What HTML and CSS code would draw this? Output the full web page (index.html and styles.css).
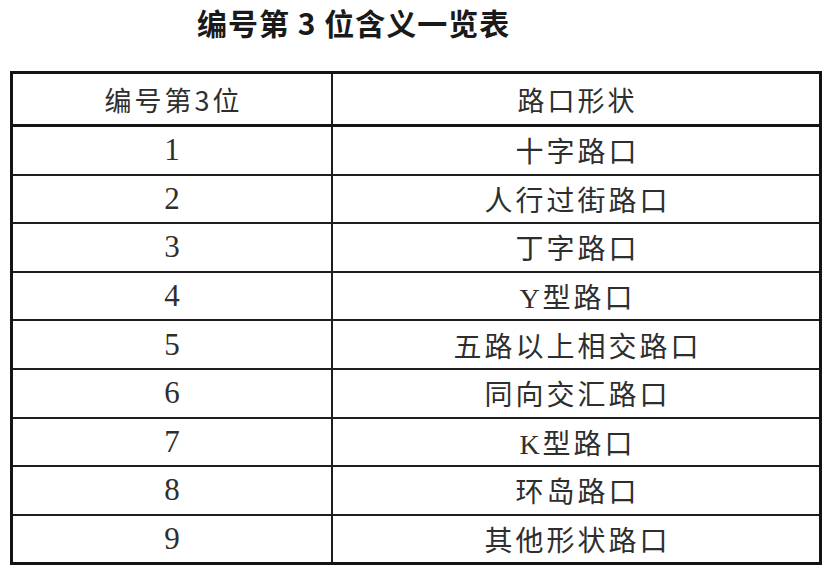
FILE: index.html
```html
<!DOCTYPE html>
<html lang="zh-CN">
<head>
<meta charset="utf-8">
<title>编号第 3 位含义一览表</title>
<link rel="stylesheet" href="styles.css">
</head>
<body>
<h1 class="title">编号第 3 位含义一览表</h1>
<table class="code-table">
  <thead>
    <tr><th class="c1">编号第3位</th><th class="c2">路口形状</th></tr>
  </thead>
  <tbody>
    <tr><td class="c1">1</td><td class="c2">十字路口</td></tr>
    <tr><td class="c1">2</td><td class="c2">人行过街路口</td></tr>
    <tr><td class="c1">3</td><td class="c2">丁字路口</td></tr>
    <tr><td class="c1">4</td><td class="c2">Y型路口</td></tr>
    <tr><td class="c1">5</td><td class="c2">五路以上相交路口</td></tr>
    <tr><td class="c1">6</td><td class="c2">同向交汇路口</td></tr>
    <tr><td class="c1">7</td><td class="c2">K型路口</td></tr>
    <tr><td class="c1">8</td><td class="c2">环岛路口</td></tr>
    <tr><td class="c1">9</td><td class="c2">其他形状路口</td></tr>
  </tbody>
</table>
</body>
</html>
```

FILE: styles.css
```css
html, body {
  margin: 0;
  padding: 0;
  background: #ffffff;
}

.title {
  margin: 0;
  padding-left: 197px;
  height: 44px;
  font-family: "Noto Sans CJK SC", "Noto Sans", sans-serif;
  font-size: 30px;
  line-height: 44px;
  font-weight: 700;
  letter-spacing: 1px;
  color: #1a1a1a;
}

.code-table {
  margin: 27px 0 0 10px;
  border-collapse: separate;
  border-spacing: 0;
  table-layout: fixed;
  width: 812px;
  border: 3px solid #141414;
  font-family: "Liberation Serif", "Noto Sans CJK SC", serif;
  color: #2e2e2e;
}

.code-table th,
.code-table td {
  padding: 0 0 0 3px;
  text-align: center;
  vertical-align: middle;
  font-weight: 400;
  font-size: 28px;
  letter-spacing: 3px;
}

.code-table th {
  height: 50px;
  border-bottom: 3px solid #141414;
  font-family: "Noto Sans CJK SC", "Noto Sans", sans-serif;
  font-size: 27px;
}

.code-table td {
  height: 46.6px;
  border-bottom: 2px solid #1e1e1e;
}

.code-table tbody tr:last-child td {
  border-bottom: none;
}

.code-table .c1 {
  width: 315px;
  border-right: 2px solid #1e1e1e;
}

.code-table td.c1 {
  padding-left: 0;
  font-size: 31px;
  letter-spacing: 0;
}
```
